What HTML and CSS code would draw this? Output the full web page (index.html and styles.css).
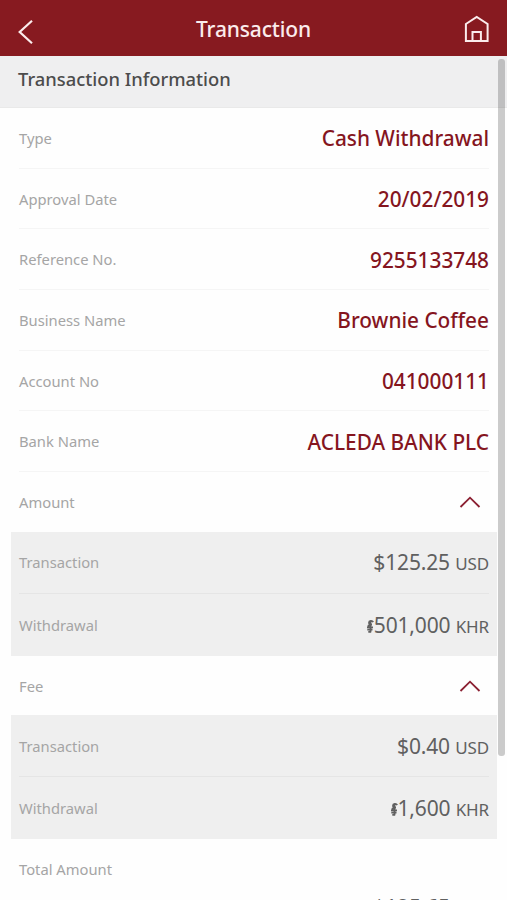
FILE: index.html
```html
<!DOCTYPE html>
<html lang="en">
<head>
    <meta charset="UTF-8">
    <meta name="viewport" content="width=device-width, initial-scale=1.0">
    <title>Transaction</title>
    <link rel="stylesheet" href="styles.css">
</head>
<body>
    <svg class="symbols">
        <symbol id="riel" viewBox="0 0 8 15">
            <path d="M7.200 3.200C6.200 1.200 3 1.500 3 3.700c0 1.500 1 1.900 3 1.800M3.500 5.800C1.800 6.500 2.200 7.700 3.800 8.200M1 8.400h6M1.300 10.700h5.200M4.500 2.500v10.500M5.200 12.900H2.300" fill="none" stroke="currentColor" stroke-width="1.800"/>
        </symbol>
        <symbol id="chevron" viewBox="0 0 22 12">
            <path d="M1.500 11 11 1.700l9.500 9.300" fill="none" stroke="currentColor" stroke-width="1.800"/>
        </symbol>
    </svg>

    <header class="header">
        <a href="#" class="back" aria-label="Back">
            <svg width="16" height="26" viewBox="0 0 16 26"><path d="M14 1.800 1.700 13 14 24.200" fill="none" stroke="currentColor" stroke-width="2.200"/></svg>
        </a>
        <h1>Transaction</h1>
        <a href="#" class="home" aria-label="Home">
            <svg width="26" height="28" viewBox="0 0 26 28"><path d="M1.900 9 12.700 2l10.900 7v17H1.900zM8.500 26v-8.900h8.400V26" fill="none" stroke="currentColor" stroke-width="2"/></svg>
        </a>
    </header>

    <main class="content">
        <h2>Transaction Information</h2>

        <div class="info">
            <div class="row"><span class="label">Type</span><span class="value">Cash Withdrawal</span></div>
            <div class="row"><span class="label">Approval Date</span><span class="value">20/02/2019</span></div>
            <div class="row"><span class="label">Reference No.</span><span class="value">9255133748</span></div>
            <div class="row"><span class="label">Business Name</span><span class="value">Brownie Coffee</span></div>
            <div class="row"><span class="label">Account No</span><span class="value">041000111</span></div>
            <div class="row"><span class="label">Bank Name</span><span class="value">ACLEDA BANK PLC</span></div>
        </div>

        <div class="toggle">
            <span class="label">Amount</span>
            <svg class="chevron"><use href="#chevron"/></svg>
        </div>
        <div class="details">
            <div class="row"><span class="label">Transaction</span><span class="money">$125.25 <small>USD</small></span></div>
            <div class="row"><span class="label">Withdrawal</span><span class="money"><svg class="riel"><use href="#riel"/></svg>501,000 <small>KHR</small></span></div>
        </div>

        <div class="toggle">
            <span class="label">Fee</span>
            <svg class="chevron"><use href="#chevron"/></svg>
        </div>
        <div class="details">
            <div class="row"><span class="label">Transaction</span><span class="money">$0.40 <small>USD</small></span></div>
            <div class="row"><span class="label">Withdrawal</span><span class="money"><svg class="riel"><use href="#riel"/></svg>1,600 <small>KHR</small></span></div>
        </div>

        <div class="total">
            <span class="label">Total Amount</span>
            <span class="money">$125.65 <small>USD</small></span>
        </div>

        <div class="scrollbar"></div>
    </main>
</body>
</html>
```

FILE: styles.css
```css
* {
    box-sizing: border-box;
}

body {
    margin: 0;
    height: 900px;
    overflow: hidden;
    background-color: #fefefe;
    font-family: "Noto Sans", sans-serif;
}

.symbols {
    display: none;
}

.header {
    display: grid;
    grid-template-columns: 60px 1fr 60px;
    align-items: center;
    height: 56px;
    background-color: #871a20;
    color: #fbecec;
}

.header a {
    display: flex;
    color: inherit;
}

.header h1 {
    margin: 0;
    padding-top: 2px;
    text-align: center;
    font-size: 21px;
    font-weight: 500;
    letter-spacing: -0.150px;
    line-height: 28px;
}

.back {
    padding: 8px 0 0 18px;
}

.home {
    padding: 1px 0 0 17px;
}

.content {
    position: relative;
    height: 844px;
    overflow: hidden;
}

.content h2 {
    margin: 0;
    height: 52px;
    padding: 9px 18px 0;
    background-color: #efeff0;
    border-bottom: 1px solid #e9e9e9;
    color: #4c4c4c;
    font-size: 18.350px;
    font-weight: 500;
    line-height: 28px;
}

.info {
    padding: 0 18px 0 19px;
}

.row {
    display: flex;
    justify-content: space-between;
    align-items: center;
}

.info .row {
    height: 60.700px;
    border-bottom: 1px solid #f5f5f5;
}

.label {
    color: #a5a5a5;
    font-size: 14.750px;
    line-height: 20px;
}

.value {
    padding-top: 1px;
    color: #85151e;
    font-size: 20.800px;
    font-weight: 500;
    line-height: 28px;
}

.toggle {
    display: flex;
    justify-content: space-between;
    align-items: center;
    height: 59.600px;
    padding: 0 26px 0 19px;
}

.chevron {
    width: 22px;
    height: 12px;
    color: #8b2032;
}

.details {
    margin: 0 10px 0 11px;
    padding: 0 8px;
    background-color: #efefef;
}

.details .row {
    height: 62px;
}

.details .row:first-child {
    border-bottom: 1px solid #e5e5e5;
}

.money {
    padding-top: 2px;
    color: #606060;
    font-size: 21px;
    letter-spacing: -0.150px;
    line-height: 28px;
}

.money small {
    font-size: 17px;
}

.riel {
    width: 8px;
    height: 15px;
    vertical-align: -1px;
}

.total {
    display: flex;
    flex-direction: column;
    padding: 20px 18px 0 19px;
}

.total .money {
    align-self: flex-end;
    margin-top: 12px;
}

.scrollbar {
    position: absolute;
    top: 3px;
    right: 2px;
    width: 7px;
    height: 697px;
    border-radius: 3px;
    background-color: rgba(0, 0, 0, 0.2);
}
```
